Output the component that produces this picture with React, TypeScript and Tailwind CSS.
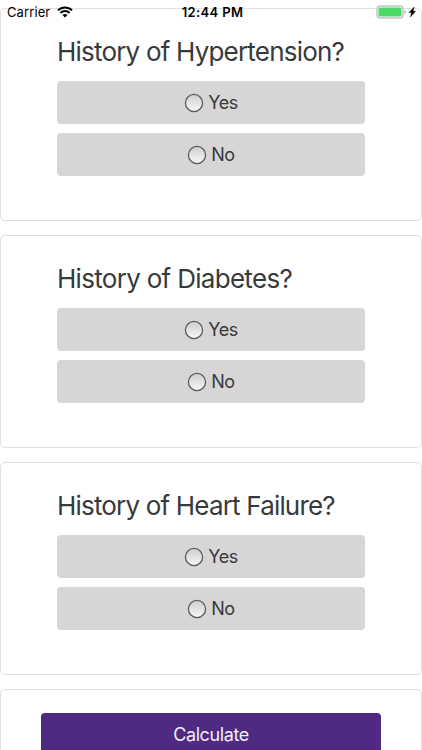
interface QuestionCardProps {
  title: string;
  titleClass: string;
}

export default function App() {
  return (
    <div className="relative h-[750px] w-[422px] overflow-hidden bg-white pt-2 font-['Inter',sans-serif] text-[#373a3c]">
      <StatusBar />
      <main className="flex flex-col gap-3.5">
        {questions.map((question) => (
          <QuestionCard key={question.title} {...question} />
        ))}
        <section className="h-[120px] rounded-[5px] border border-[#dfdfdf] px-10 pt-[23px]">
          <button className="h-[43px] w-full rounded-[4px] bg-[#4f2a82] text-[18px] tracking-[-0.4px] text-[#f3eff8]">
            Calculate
          </button>
        </section>
      </main>
    </div>
  );
}

function QuestionCard({ title, titleClass }: QuestionCardProps) {
  return (
    <section className="h-[213px] rounded-[5px] border border-[#dfdfdf] px-14 pt-[27px]">
      <h2 className={`h-[45px] text-[26px] leading-[32px] whitespace-nowrap ${titleClass}`}>
        {title}
      </h2>
      <div className="flex flex-col gap-[9px]">
        <RadioOption label="Yes" />
        <RadioOption label="No" />
      </div>
    </section>
  );
}

function RadioOption({ label }: { label: string }) {
  return (
    <label className="flex h-[43px] items-center justify-center gap-1 rounded-[4px] bg-[#d7d5d6] text-[18px] tracking-[-0.5px]">
      <svg width="20" height="20" viewBox="0 0 20 20">
        <defs>
          <linearGradient id={`radio-${label}`} x1="0" y1="0" x2="0" y2="1">
            <stop offset="0" stopColor="#cfcdce" />
            <stop offset="1" stopColor="#f8f8f8" />
          </linearGradient>
        </defs>
        <circle cx="10" cy="10" r="8.6" fill={`url(#radio-${label})`} stroke="#5c5b5d" strokeWidth="1.3" />
      </svg>
      {label}
    </label>
  );
}

function StatusBar() {
  return (
    <header className="absolute inset-x-0 top-0 flex h-6 items-center justify-between pr-[5px] pl-[7px] text-[13px] text-black">
      <div className="flex items-center gap-[7px]">
        <span className="pt-0.5 tracking-[0.1px]">Carrier</span>
        <svg width="16" height="12" viewBox="0 0 16 12" fill="none" stroke="#000" strokeWidth="2">
          <path d="M1 4.4a10 10 0 0 1 14 0M3.4 7a6.5 6.5 0 0 1 9.2 0" />
          <path d="M8 11.6 5.5 9.1a3.6 3.6 0 0 1 5 0z" fill="#000" stroke="none" />
        </svg>
      </div>
      <span className="absolute inset-x-0 pt-0.5 pl-[3px] text-center font-semibold tracking-[0.35px]">
        12:44 PM
      </span>
      <svg width="41" height="14" viewBox="0 0 41 14">
        <rect x="1" y="1" width="26" height="12" rx="2.5" fill="#fff" stroke="#a5a5a5" />
        <rect x="2.5" y="2.5" width="23" height="9" rx="1" fill="#4cd964" />
        <path d="M28.6 5v4c1.4-.6 1.4-3.4 0-4z" fill="#8b8b8b" />
        <path d="m38.2 2-5.2 5.6h2.5L34.4 12l5.2-5.8H37z" fill="#000" stroke="#000" strokeWidth=".4" />
      </svg>
    </header>
  );
}

const questions: QuestionCardProps[] = [
  { title: "History of Hypertension?", titleClass: "tracking-[-0.8px]" },
  { title: "History of Diabetes?", titleClass: "tracking-[-0.7px]" },
  { title: "History of Heart Failure?", titleClass: "tracking-[-0.82px]" },
];
